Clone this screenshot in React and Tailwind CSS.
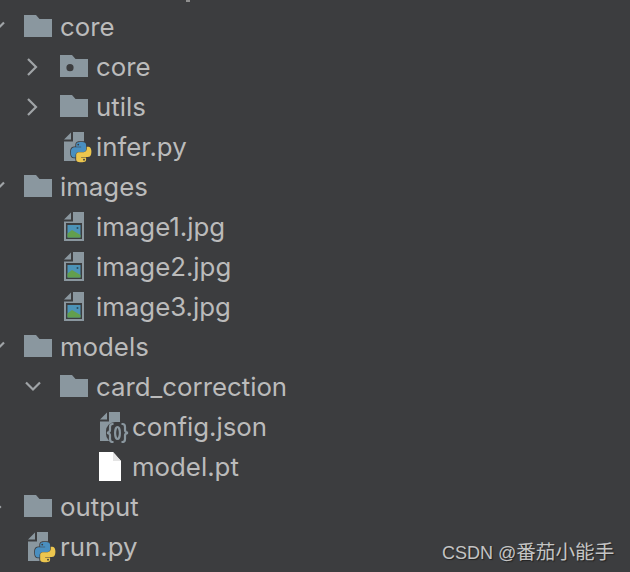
const tree = [
  { level: 0, open: true, icon: "folder", name: "core" },
  { level: 1, open: false, icon: "package", name: "core" },
  { level: 1, open: false, icon: "folder", name: "utils" },
  { level: 1, icon: "python", name: "infer.py" },
  { level: 0, open: true, icon: "folder", name: "images" },
  { level: 1, icon: "image", name: "image1.jpg" },
  { level: 1, icon: "image", name: "image2.jpg" },
  { level: 1, icon: "image", name: "image3.jpg" },
  { level: 0, open: true, icon: "folder", name: "models" },
  { level: 1, open: true, icon: "folder", name: "card_correction" },
  { level: 2, icon: "json", name: "config.json" },
  { level: 2, icon: "blank", name: "model.pt" },
  { level: 0, open: false, icon: "folder", name: "output" },
  { level: 0, icon: "python", name: "run.py" },
];

const BG = "#3c3d3f";

const Chevron = ({ open }) => (
  <svg width="36" height="40" viewBox="0 0 36 40" fill="none" stroke="#a0a4a7" strokeWidth="2.2">
    {open ? <path d="M2 15.5 L9 22.5 L16 15.5" /> : <path d="M4 12 L12 20 L4 28" />}
  </svg>
);

const FOLDER = "M0 0H12L15.5 4H28V22H0Z";

const FolderIcon = ({ dot }) => (
  <svg width="28" height="22" viewBox="0 0 28 22" className="mt-[-2px]">
    <path d={FOLDER} fill="#8a979f" />
    {dot && <circle cx="10" cy="12.7" r="3.6" fill={BG} />}
  </svg>
);

const SheetBase = () => (
  <>
    <path d="M0 7.5L7 0.5V7.5Z" fill="#8a979f" />
    <path d="M9 0H20V29H0V9.5H9Z" fill="#8a979f" />
  </>
);

const PY_BLUE =
  "M54.9.9c-4.6 0-9 .4-12.8 1.1C30.8 4 28.8 8.2 28.8 15.9v10.2h26.7v3.4H18.8c-7.8 0-14.6 4.7-16.7 13.6-2.5 10.2-2.6 16.6 0 27.2 1.9 7.9 6.4 13.6 14.2 13.6h9.2V71.7c0-8.8 7.7-16.6 16.7-16.6h26.7c7.4 0 13.3-6.1 13.3-13.6V15.9c0-7.3-6.1-12.7-13.3-13.9C64.3 1.3 59.5.9 54.9.9z";

const PythonIcon = () => (
  <svg width="28" height="31" viewBox="0 0 28 31" className="mt-[1px]">
    <SheetBase />
    <g transform="translate(6.8 9.8) scale(0.186)">
      <path d={PY_BLUE} fill={BG} stroke={BG} strokeWidth="9" />
      <g transform="rotate(180 55.5 55.5)">
        <path d={PY_BLUE} fill={BG} stroke={BG} strokeWidth="9" />
      </g>
      <path d={PY_BLUE} fill="#4a8fc0" />
      <circle cx="40" cy="15" r="5" fill={BG} />
      <g transform="rotate(180 55.5 55.5)">
        <path d={PY_BLUE} fill="#ecc64e" />
        <circle cx="40" cy="15" r="5" fill={BG} />
      </g>
    </g>
  </svg>
);

const ImageIcon = () => (
  <svg width="28" height="30" viewBox="0 0 28 30">
    <SheetBase />
    <rect x="2" y="11" width="16" height="16" fill={BG} />
    <rect x="3.5" y="13" width="13" height="12.5" fill="#4c93b8" />
    <path d="M3.5 21.5L8 18L16.5 23V25.5H3.5Z" fill="#639f4e" />
    <circle cx="13.5" cy="16" r="1" fill="#2f4a5c" />
  </svg>
);

const JsonIcon = () => (
  <svg width="30" height="31" viewBox="0 0 30 31" className="mt-[1px]">
    <SheetBase />
    <rect x="6" y="10" width="24" height="21" rx="9" fill={BG} />
    <g fill="none" stroke="#8a979f" strokeWidth="2.2">
      <path d="M13.500 12H12.500C10.500 12 10 13 10 15V18C10 19.500 9 20.500 7 20.800C9 21 10 22 10 23.500V27C10 29 10.500 30 12.500 30H13.500" />
      <path d="M21.500 12H22.500C24.500 12 25 13 25 15V18C25 19.500 26 20.500 28 20.800C26 21 25 22 25 23.500V27C25 29 24.500 30 22.500 30H21.500" />
      <ellipse cx="17.500" cy="21" rx="2.400" ry="6" />
    </g>
  </svg>
);

const BlankIcon = () => (
  <svg width="28" height="30" viewBox="0 0 28 30" className="ml-[-1px]">
    <path d="M0 0H14L22 9V29H0Z" fill="#ffffff" />
    <path d="M14 0L22 9H14Z" fill="#e4e4e4" />
  </svg>
);

const icons = {
  folder: <FolderIcon />,
  package: <FolderIcon dot />,
  python: <PythonIcon />,
  image: <ImageIcon />,
  json: <JsonIcon />,
  blank: <BlankIcon />,
};

const INDENT = ["ml-0", "ml-[36px]", "ml-[72px]"];

const Row = ({ level, open, icon, name }) => (
  <div className={`flex h-10 items-center ${INDENT[level]}`}>
    <div className="h-10 w-9 shrink-0">{open !== undefined && <Chevron open={open} />}</div>
    <div className={`flex w-9 shrink-0 ${icon === "folder" || icon === "package" ? "" : "pl-1"}`}>{icons[icon]}</div>
    <span className="text-[25.8px] leading-10 text-[#bbbbbb]">{name}</span>
  </div>
);

export default function App() {
  return (
    <div className="relative h-[572px] w-[630px] overflow-hidden bg-[#3c3d3f] font-['Inter',sans-serif]">
      <div className="absolute left-[186px] top-0 h-[2px] w-[4px] bg-[#8f8f8f]" />
      <div className="ml-[-12px] pt-[7px]">
        {tree.map((item, i) => (
          <Row key={i} {...item} />
        ))}
      </div>
      <div className="absolute left-[442px] top-[540px] whitespace-nowrap font-['Liberation_Sans','Noto_Sans_CJK_SC',sans-serif] text-[18px] leading-6 text-[#c4c4c4] [text-shadow:1px_1px_1px_#222]">
        CSDN @<span className="text-[19.6px]">番茄小能手</span>
      </div>
    </div>
  );
}
